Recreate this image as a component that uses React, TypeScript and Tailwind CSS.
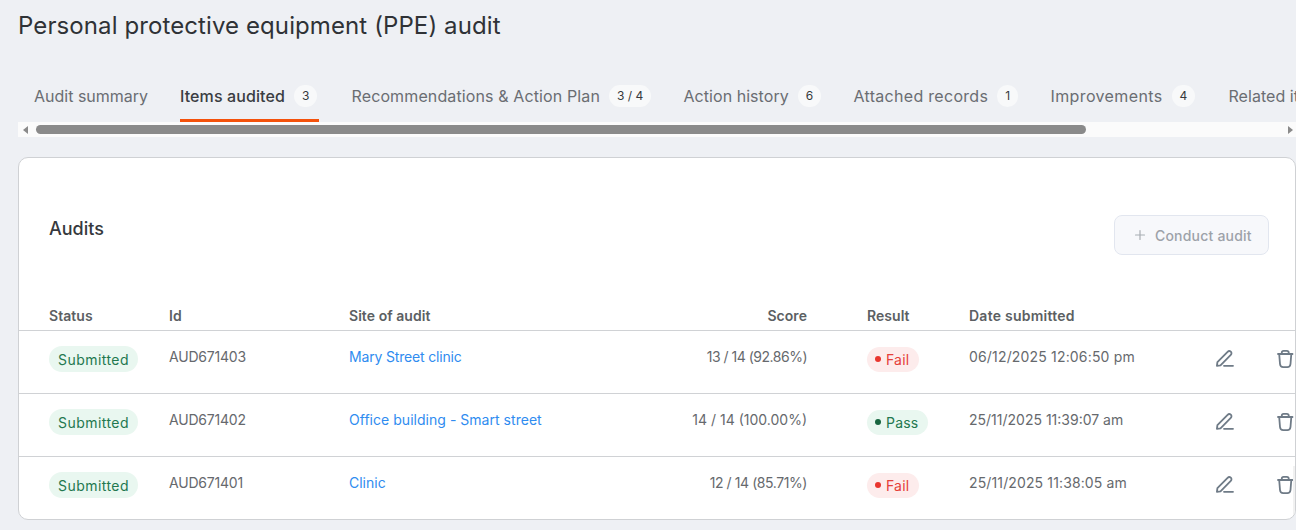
import React from "react";

function Tab({ label, count, active, w, track }: { label: string; count?: string; active?: boolean; w: string; track: string }) {
  return (
    <div className={`shrink-0 h-[50px] flex items-center border-b-[3px] pt-[1px] ${w} ${active ? "border-[#f4510b]" : "border-transparent"}`}>
      <span className={`text-[16px] whitespace-nowrap ${track} ${active ? "text-[#3a3d42] font-medium" : "text-[#6a6d72]"}`}>{label}</span>
      {count && (
        <span className="ml-[9px] h-[22px] px-[8px] rounded-full bg-[#f8f9fa] text-[12px] text-[#36393d] whitespace-nowrap flex items-center justify-center">{count}</span>
      )}
    </div>
  );
}

function Edit() {
  return (
    <svg width="20" height="20" viewBox="0 0 20 20" fill="none" stroke="#6f7b87" strokeWidth="1.8" strokeLinecap="round" strokeLinejoin="round">
      <path d="M1.9 16.8 L2.4 13.2 L12.6 2.8 C13.5 1.9 14.9 1.9 15.8 2.7 C16.7 3.6 16.7 4.9 15.8 5.8 L5.5 16.3 Z" />
      <path d="M9 16.8 H18" />
    </svg>
  );
}

function Trash() {
  return (
    <svg width="18" height="20" viewBox="0 0 18 20" fill="none" stroke="#6f7b87" strokeWidth="1.8" strokeLinecap="round" strokeLinejoin="round">
      <path d="M1 5 H15.5" />
      <path d="M4.8 4.8 V3.6 C4.8 2.5 5.6 1.8 6.6 1.8 H9.8 C10.9 1.8 11.7 2.5 11.7 3.6 V4.8" />
      <path d="M2.2 5 L3 15 C3.2 17 4.4 18.2 6.2 18.2 H10.3 C12.1 18.2 13.3 17 13.5 15 L14.3 5" />
    </svg>
  );
}

function Row({ id, site, siteTrack, score, scoreTrack, pass, date, dateTrack, last }: { id: string; site: string; siteTrack: string; score: string; scoreTrack: string; pass?: boolean; date: string; dateTrack: string; last?: boolean }) {
  return (
    <div className={`grid grid-cols-[120px_180px_288px_170px_162px_246px_62px_40px] pl-[30px] text-[14px] ${last ? "h-[62px]" : "h-[63px] border-b border-[#d0d2d5]"}`}>
      <div className="pt-[15px]">
        <span className="inline-flex items-center h-[26px] px-[9px] rounded-full bg-[#e9f7f0] text-[#23784f] tracking-[0.45px]">Submitted</span>
      </div>
      <div className="pt-[16px] leading-[20px] text-[#66696d] tracking-[-0.2px]">{id}</div>
      <div className={`pt-[16px] leading-[20px] text-[#2f8cf0] whitespace-nowrap ${siteTrack}`}>{site}</div>
      <div className={`pt-[16px] leading-[20px] text-[#66696d] text-right whitespace-nowrap ${scoreTrack}`}>{score}</div>
      <div className="pt-[15px] pl-[60px]">
        <span className={`inline-flex items-center whitespace-nowrap h-[25px] pl-[8px] pr-[10px] gap-[5px] rounded-full tracking-[0.2px] ${pass ? "bg-[#e9f7f0] text-[#23784f]" : "bg-[#fdecec] text-[#e5403a]"}`}>
          <span className={`w-[6px] h-[6px] rounded-full ${pass ? "bg-[#17653f]" : "bg-[#e9362f]"}`} />
          {pass ? "Pass" : "Fail"}
        </span>
      </div>
      <div className={`pt-[16px] leading-[20px] text-[#66696d] whitespace-nowrap ${dateTrack}`}>{date}</div>
      <div className="pt-[18px]"><Edit /></div>
      <div className="pt-[18px]"><Trash /></div>
    </div>
  );
}

export default function App() {
  return (
    <div className="w-[1296px] h-[530px] overflow-hidden bg-[#eef0f4] font-['Inter',sans-serif] pl-[18px]">
      <h1 className="pt-[11px] h-[72px] text-[24px] leading-[30px] text-[#2f3236] tracking-[0.1px] whitespace-nowrap">Personal protective equipment (PPE) audit</h1>
      <div className="flex pl-[16px] w-[1278px] overflow-hidden">
        <Tab label="Audit summary" w="w-[146px]" track="tracking-[0px]" />
        <div className="w-[139px] shrink-0 mr-[32.5px]"><Tab label="Items audited" count="3" active w="w-[139px]" track="tracking-[0.1px]" /></div>
        <Tab label="Recommendations & Action Plan" count="3 / 4" w="w-[332px]" track="tracking-[0.12px]" />
        <Tab label="Action history" count="6" w="w-[170px]" track="tracking-[0.05px]" />
        <Tab label="Attached records" count="1" w="w-[197px]" track="tracking-[0.3px]" />
        <Tab label="Improvements" count="4" w="w-[178px]" track="tracking-[0.38px]" />
        <Tab label="Related items" w="w-[120px]" track="tracking-[0.05px]" />
      </div>
      <div className="w-[1278px] h-[15px] bg-[#fbfbfb] flex items-center relative">
        <span className="ml-[5px] w-0 h-0 border-y-[4px] border-y-transparent border-r-[5px] border-r-[#8a8a8a]" />
        <span className="ml-[8px] w-[1050px] h-[9px] rounded-full bg-[#8a8a8a]" />
        <span className="ml-auto mr-[3px] w-0 h-0 border-y-[4px] border-y-transparent border-l-[5px] border-l-[#8a8a8a]" />
      </div>
      <div className="relative mt-[20px] w-[1278px] h-[363px] bg-white border border-[#cfd1d4] rounded-[10px] overflow-hidden">
        <div className="flex justify-between h-[130px] pl-[30px] pr-[26px]">
          <h2 className="pt-[59px] text-[18px] leading-[24px] font-medium text-[#36393d]">Audits</h2>
          <button className="mt-[57px] w-[155px] h-[40px] flex items-center pl-[19px] gap-[9px] rounded-[8px] border border-[#e2e6ef] bg-[#f7f8fb] text-[14px] font-medium text-[#9da2a9] whitespace-nowrap tracking-[0.2px]">
            <svg width="12" height="12" viewBox="0 0 12 12" stroke="#a8adb3" strokeWidth="1.2" strokeLinecap="round"><path d="M6 1.5V10.5M1.5 6H10.5" /></svg>
            Conduct audit
          </button>
        </div>
        <div className="grid grid-cols-[120px_180px_288px_170px_162px_246px] pl-[30px] pt-[18px] h-[43px] items-start border-b border-[#d0d2d5] text-[14px] font-semibold leading-[20px] text-[#5c5f63] tracking-[0.05px]">
          <div>Status</div>
          <div>Id</div>
          <div>Site of audit</div>
          <div className="text-right">Score</div>
          <div className="pl-[60px]">Result</div>
          <div className="whitespace-nowrap tracking-[0.25px]">Date submitted</div>
        </div>
        <Row id="AUD671403" site="Mary Street clinic" siteTrack="tracking-[-0.17px]" score="13 / 14 (92.86%)" scoreTrack="tracking-[-0.5px]" date="06/12/2025 12:06:50 pm" dateTrack="tracking-[0.17px]" />
        <Row id="AUD671402" site="Office building - Smart street" siteTrack="tracking-[0.03px]" score="14 / 14 (100.00%)" scoreTrack="tracking-[0px]" pass date="25/11/2025 11:39:07 am" dateTrack="tracking-[0px]" />
        <Row id="AUD671401" site="Clinic" siteTrack="tracking-[0px]" score="12 / 14 (85.71%)" scoreTrack="tracking-[-0.42px]" date="25/11/2025 11:38:05 am" dateTrack="tracking-[0.13px]" last />
        <div className="absolute right-0 top-[308px] w-[2px] h-[50px] bg-[#f1f1f1]" />
      </div>
    </div>
  );
}
